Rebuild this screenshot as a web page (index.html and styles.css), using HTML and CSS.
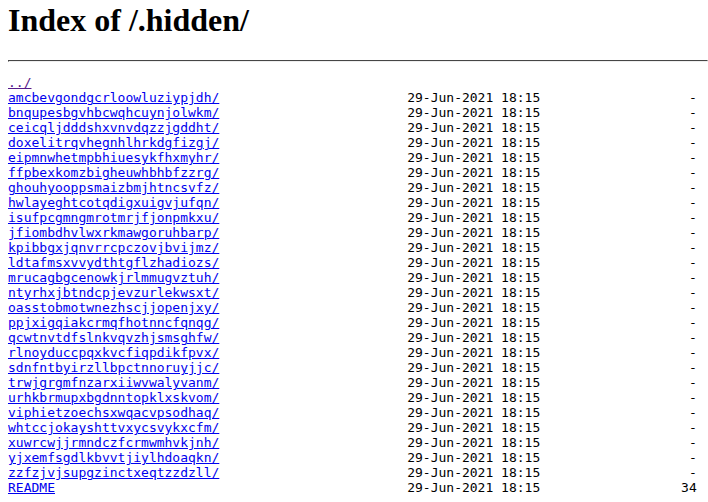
FILE: index.html
```html
<!DOCTYPE html>
<html>
<head>
<meta charset="utf-8">
<title>Index of /.hidden/</title>
<link rel="stylesheet" href="styles.css">
</head>
<body class="page">
<h1 class="title">Index of /.hidden/</h1><hr class="rule"><pre class="listing"><a class="visited" href="../">../</a>
<a href="amcbevgondgcrloowluziypjdh/">amcbevgondgcrloowluziypjdh/</a>                        29-Jun-2021 18:15                   -
<a href="bnqupesbgvhbcwqhcuynjolwkm/">bnqupesbgvhbcwqhcuynjolwkm/</a>                        29-Jun-2021 18:15                   -
<a href="ceicqljdddshxvnvdqzzjgddht/">ceicqljdddshxvnvdqzzjgddht/</a>                        29-Jun-2021 18:15                   -
<a href="doxelitrqvhegnhlhrkdgfizgj/">doxelitrqvhegnhlhrkdgfizgj/</a>                        29-Jun-2021 18:15                   -
<a href="eipmnwhetmpbhiuesykfhxmyhr/">eipmnwhetmpbhiuesykfhxmyhr/</a>                        29-Jun-2021 18:15                   -
<a href="ffpbexkomzbigheuwhbhbfzzrg/">ffpbexkomzbigheuwhbhbfzzrg/</a>                        29-Jun-2021 18:15                   -
<a href="ghouhyooppsmaizbmjhtncsvfz/">ghouhyooppsmaizbmjhtncsvfz/</a>                        29-Jun-2021 18:15                   -
<a href="hwlayeghtcotqdigxuigvjufqn/">hwlayeghtcotqdigxuigvjufqn/</a>                        29-Jun-2021 18:15                   -
<a href="isufpcgmngmrotmrjfjonpmkxu/">isufpcgmngmrotmrjfjonpmkxu/</a>                        29-Jun-2021 18:15                   -
<a href="jfiombdhvlwxrkmawgoruhbarp/">jfiombdhvlwxrkmawgoruhbarp/</a>                        29-Jun-2021 18:15                   -
<a href="kpibbgxjqnvrrcpczovjbvijmz/">kpibbgxjqnvrrcpczovjbvijmz/</a>                        29-Jun-2021 18:15                   -
<a href="ldtafmsxvvydthtgflzhadiozs/">ldtafmsxvvydthtgflzhadiozs/</a>                        29-Jun-2021 18:15                   -
<a href="mrucagbgcenowkjrlmmugvztuh/">mrucagbgcenowkjrlmmugvztuh/</a>                        29-Jun-2021 18:15                   -
<a href="ntyrhxjbtndcpjevzurlekwsxt/">ntyrhxjbtndcpjevzurlekwsxt/</a>                        29-Jun-2021 18:15                   -
<a href="oasstobmotwnezhscjjopenjxy/">oasstobmotwnezhscjjopenjxy/</a>                        29-Jun-2021 18:15                   -
<a href="ppjxigqiakcrmqfhotnncfqnqg/">ppjxigqiakcrmqfhotnncfqnqg/</a>                        29-Jun-2021 18:15                   -
<a href="qcwtnvtdfslnkvqvzhjsmsghfw/">qcwtnvtdfslnkvqvzhjsmsghfw/</a>                        29-Jun-2021 18:15                   -
<a href="rlnoyduccpqxkvcfiqpdikfpvx/">rlnoyduccpqxkvcfiqpdikfpvx/</a>                        29-Jun-2021 18:15                   -
<a href="sdnfntbyirzllbpctnnoruyjjc/">sdnfntbyirzllbpctnnoruyjjc/</a>                        29-Jun-2021 18:15                   -
<a href="trwjgrgmfnzarxiiwvwalyvanm/">trwjgrgmfnzarxiiwvwalyvanm/</a>                        29-Jun-2021 18:15                   -
<a href="urhkbrmupxbgdnntopklxskvom/">urhkbrmupxbgdnntopklxskvom/</a>                        29-Jun-2021 18:15                   -
<a href="viphietzoechsxwqacvpsodhaq/">viphietzoechsxwqacvpsodhaq/</a>                        29-Jun-2021 18:15                   -
<a href="whtccjokayshttvxycsvykxcfm/">whtccjokayshttvxycsvykxcfm/</a>                        29-Jun-2021 18:15                   -
<a href="xuwrcwjjrmndczfcrmwmhvkjnh/">xuwrcwjjrmndczfcrmwmhvkjnh/</a>                        29-Jun-2021 18:15                   -
<a href="yjxemfsgdlkbvvtjiylhdoaqkn/">yjxemfsgdlkbvvtjiylhdoaqkn/</a>                        29-Jun-2021 18:15                   -
<a href="zzfzjvjsupgzinctxeqtzzdzll/">zzfzjvjsupgzinctxeqtzzdzll/</a>                        29-Jun-2021 18:15                   -
<a href="README">README</a>                                             29-Jun-2021 18:15                  34
</pre><hr class="rule">
</body>
</html>
```
FILE: styles.css
```css
.page {
  margin: 0 0 8px 8px;
  background: #fff;
  color: #000;
}
.title {
  font-family: "Liberation Serif", "Times New Roman", serif;
  font-size: 32px;
  font-weight: bold;
  margin: 2px 0 21.44px;
}
.rule {
  margin: 8px 0;
  border: 1px inset #eee;
  border-top-color: #9a9a9a;
  border-left-color: #9a9a9a;
  height: 0;
}
.listing {
  font-family: "DejaVu Sans Mono", monospace;
  font-size: 13px;
  margin: 13px 0;
}
.listing a {
  color: #0000ee;
}
.listing a.visited {
  color: #551a8b;
}
```
